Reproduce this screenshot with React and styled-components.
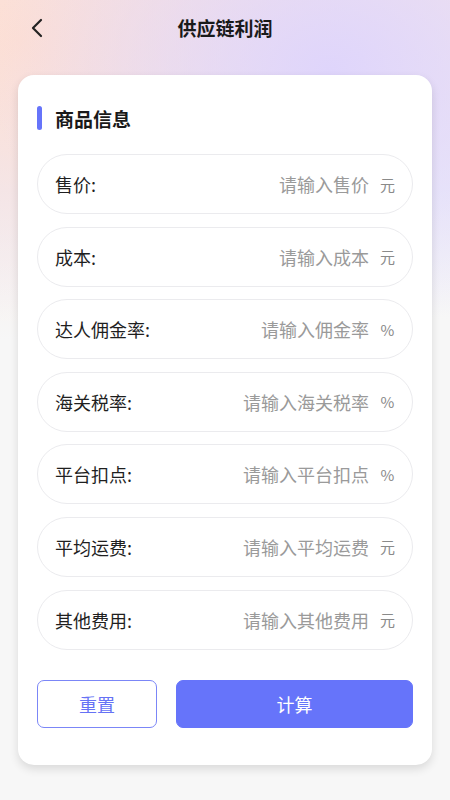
import React, { useState } from "react";
import styled, { createGlobalStyle } from "styled-components";

const GlobalStyle = createGlobalStyle`
  html, body {
    margin: 0;
    padding: 0;
  }
  body {
    font-family: "Noto Sans CJK SC", "Noto Sans", sans-serif;
    background: #f7f7f7;
  }
  * {
    box-sizing: border-box;
  }
`;

const fields = [
  { label: "售价", placeholder: "请输入售价", unit: "元" },
  { label: "成本", placeholder: "请输入成本", unit: "元" },
  { label: "达人佣金率", placeholder: "请输入佣金率", unit: "%" },
  { label: "海关税率", placeholder: "请输入海关税率", unit: "%" },
  { label: "平台扣点", placeholder: "请输入平台扣点", unit: "%" },
  { label: "平均运费", placeholder: "请输入平均运费", unit: "元" },
  { label: "其他费用", placeholder: "请输入其他费用", unit: "元" },
];

function App() {
  const [values, setValues] = useState({});

  const handleChange = (label, value) => {
    setValues({ ...values, [label]: value });
  };

  return (
    <>
      <GlobalStyle />
      <Page>
        <Header>
          <BackButton aria-label="返回">
            <svg width="16" height="20" viewBox="0 0 16 20" fill="none">
              <path
                d="M11 2 L3 10 L11 18"
                stroke="#222"
                strokeWidth="2.2"
                strokeLinecap="round"
                strokeLinejoin="round"
              />
            </svg>
          </BackButton>
          <Title>供应链利润</Title>
        </Header>
        <Card>
          <SectionTitle>商品信息</SectionTitle>
          <FieldList>
            {fields.map((f) => (
              <FieldRow key={f.label}>
                <Label>{f.label}:</Label>
                <Input
                  placeholder={f.placeholder}
                  value={values[f.label] || ""}
                  onChange={(e) => handleChange(f.label, e.target.value)}
                />
                <Unit>{f.unit}</Unit>
              </FieldRow>
            ))}
          </FieldList>
          <Actions>
            <Button onClick={() => setValues({})}>重置</Button>
            <Button primary>计算</Button>
          </Actions>
        </Card>
      </Page>
    </>
  );
}

const Page = styled.div`
  min-height: 800px;
  padding: 0 18px 35px;
  background:
    radial-gradient(ellipse 340px 260px at 330px 70px, rgba(222, 212, 252, 0.95), rgba(222, 212, 252, 0) 100%),
    radial-gradient(ellipse 330px 300px at 20px 40px, rgba(253, 223, 212, 1), rgba(253, 223, 212, 0) 100%),
    linear-gradient(180deg, #f4e6ea 0px, #ecebf8 190px, #f7f7f7 320px, #f7f7f7 100%);
`;

const Header = styled.div`
  position: relative;
  height: 54px;
  display: flex;
  align-items: center;
  justify-content: center;
  margin-bottom: 21px;
`;

const BackButton = styled.button`
  position: absolute;
  left: 8px;
  top: 17px;
  width: 24px;
  height: 22px;
  padding: 0;
  border: none;
  background: transparent;
  display: flex;
  align-items: center;
  justify-content: center;
`;

const Title = styled.h1`
  margin: 0;
  font-size: 19px;
  font-weight: 700;
  color: #1a1a1a;
`;

const Card = styled.div`
  background: #fff;
  border-radius: 16px;
  padding: 28px 19px 37px 19px;
  box-shadow: 0 4px 10px rgba(0, 0, 0, 0.12);
`;

const SectionTitle = styled.div`
  display: flex;
  align-items: center;
  gap: 13px;
  font-size: 19px;
  font-weight: 700;
  color: #1a1a1a;
  height: 30px;
  margin-bottom: 21px;

  &::before {
    content: "";
    width: 5px;
    height: 24px;
    border-radius: 3px;
    background: #6674fa;
  }
`;

const FieldList = styled.div`
  display: flex;
  flex-direction: column;
  gap: 12.6px;
`;

const FieldRow = styled.label`
  display: flex;
  align-items: center;
  height: 60px;
  padding: 0 17px 0 17px;
  border: 1px solid #ebebee;
  border-radius: 30px;
  background: #fff;
`;

const Label = styled.span`
  font-size: 18px;
  color: #1f1f1f;
  white-space: nowrap;
`;

const Input = styled.input`
  flex: 1;
  min-width: 0;
  border: none;
  outline: none;
  background: transparent;
  text-align: right;
  font-family: inherit;
  font-size: 18px;
  color: #333;
  padding: 0;

  &::placeholder {
    color: #9a9a9a;
  }
`;

const Unit = styled.span`
  margin-left: 11px;
  font-size: 15px;
  color: #8a8a8a;
  width: 15px;
  text-align: center;
`;

const Actions = styled.div`
  display: flex;
  gap: 19px;
  margin-top: 30px;
`;

const Button = styled.button`
  height: 48px;
  border-radius: 7px;
  font-family: inherit;
  font-size: 18px;
  cursor: pointer;
  width: ${(p) => (p.primary ? "auto" : "120px")};
  flex: ${(p) => (p.primary ? 1 : "none")};
  border: 1px solid ${(p) => (p.primary ? "#6674fa" : "#7b86f7")};
  background: ${(p) => (p.primary ? "#6674fa" : "#fff")};
  color: ${(p) => (p.primary ? "#fff" : "#6672f5")};
`;

export default App;
